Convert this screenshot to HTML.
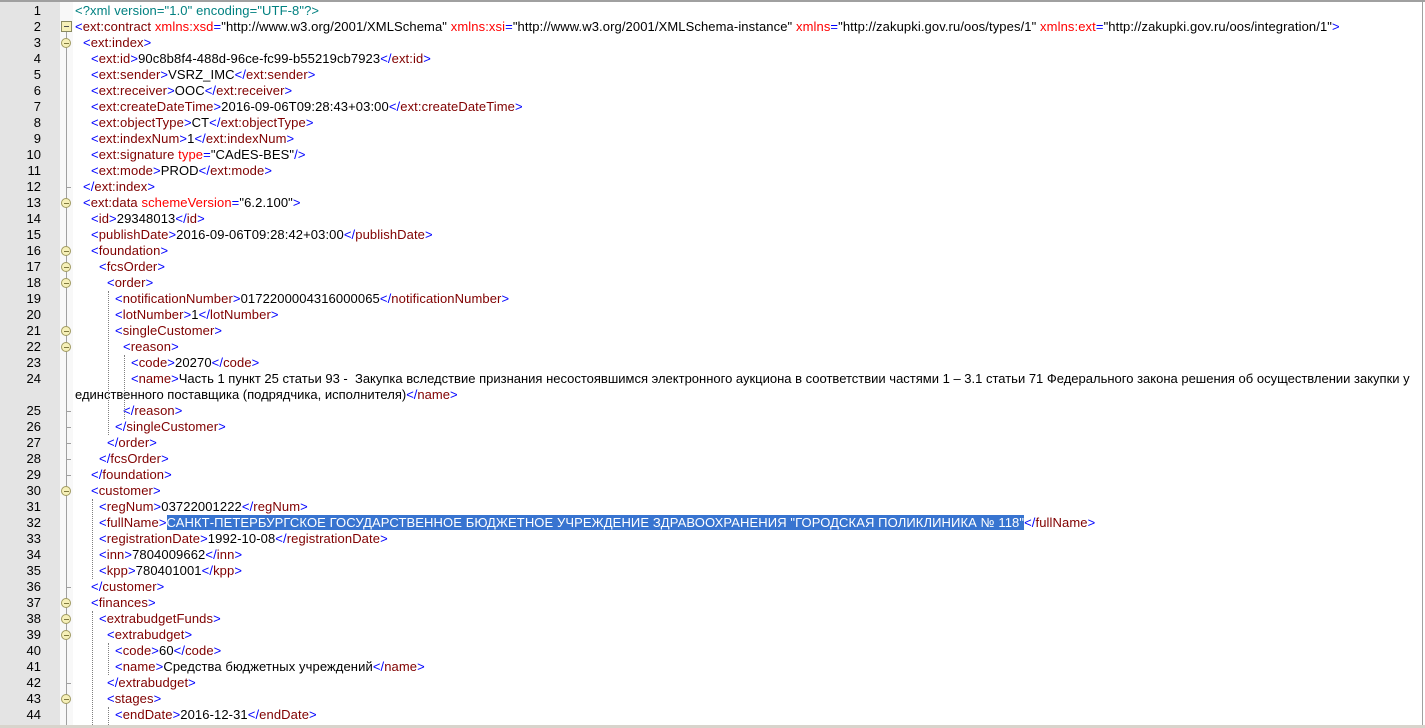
<!DOCTYPE html>
<html><head><meta charset="utf-8"><style>
*{margin:0;padding:0}
body{width:1425px;height:728px;background:#fff;position:relative;overflow:hidden;font-family:"Liberation Sans",Arial,sans-serif;font-size:13px;letter-spacing:0.1px}
#top{position:absolute;left:0;top:0;width:1425px;height:2px;background:#a0a0a0}
#right{position:absolute;right:2px;top:0;width:1px;height:728px;background:#a0a0a0}
#bot{position:absolute;left:0;top:725px;width:1425px;height:3px;background:#d8d4cc}
#gut{position:absolute;left:0;top:2px;width:60px;height:723px;background:#e4e4e4}
#fold{position:absolute;left:60px;top:2px;width:13px;height:723px;background:#f8f8f8}
#vl{position:absolute;left:66px;top:27px;width:1px;height:700px;background:#a0a0a0}
.n{position:absolute;left:0;width:41px;text-align:right;height:16px;line-height:16px;color:#000;letter-spacing:0}
.r{position:absolute;left:75px;height:16px;line-height:16px;white-space:pre;color:#000}
.b{color:#0000ff}.t{color:#800000}.a{color:#ff0000}.d{color:#008080}
.sel{background:#3874d0;color:#fff}
.c{position:absolute;left:61px;width:10px;height:10px;border-radius:50%;background:#f6f0b8;border:1px solid #a09a60;box-sizing:border-box}
.c:after{content:"";position:absolute;left:2px;top:4px;width:5px;height:1px;background:#807a40}
.sq{position:absolute;left:61px;width:11px;height:11px;background:#f6f0b8;border:1px solid #8a8a60;box-sizing:border-box}
.sq:after{content:"";position:absolute;left:2px;top:4px;width:5px;height:1px;background:#505050}
.tk{position:absolute;left:66px;width:5px;height:1px;background:#a0a0a0}
.g{position:absolute;width:0;border-left:1px dotted #808080}
</style></head><body>
<div id="gut"></div><div id="fold"></div><div id="vl"></div>
<div id="top"></div><div id="right"></div><div id="bot"></div>

<div class="n" style="top:3px">1</div><div class="r" style="top:3px"><span class="d">&lt;?xml version="1.0" encoding="UTF-8"?&gt;</span></div>
<div class="n" style="top:19px">2</div><div class="r" style="top:19px"><span class="b">&lt;</span><span class="t">ext:contract</span> <span class="a">xmlns:xsd</span><span class="b">=</span>"http://www.w3.org/2001/XMLSchema" <span class="a">xmlns:xsi</span><span class="b">=</span>"http://www.w3.org/2001/XMLSchema-instance" <span class="a">xmlns</span><span class="b">=</span>"http://zakupki.gov.ru/oos/types/1" <span class="a">xmlns:ext</span><span class="b">=</span>"http://zakupki.gov.ru/oos/integration/1"<span class="b">&gt;</span></div>
<div class="n" style="top:35px">3</div><div class="r" style="top:35px;left:83px"><span class="b">&lt;</span><span class="t">ext:index</span><span class="b">&gt;</span></div>
<div class="n" style="top:51px">4</div><div class="r" style="top:51px;left:91px"><span class="b">&lt;</span><span class="t">ext:id</span><span class="b">&gt;</span>90c8b8f4-488d-96ce-fc99-b55219cb7923<span class="b">&lt;/</span><span class="t">ext:id</span><span class="b">&gt;</span></div>
<div class="n" style="top:67px">5</div><div class="r" style="top:67px;left:91px"><span class="b">&lt;</span><span class="t">ext:sender</span><span class="b">&gt;</span>VSRZ_IMC<span class="b">&lt;/</span><span class="t">ext:sender</span><span class="b">&gt;</span></div>
<div class="n" style="top:83px">6</div><div class="r" style="top:83px;left:91px"><span class="b">&lt;</span><span class="t">ext:receiver</span><span class="b">&gt;</span>OOC<span class="b">&lt;/</span><span class="t">ext:receiver</span><span class="b">&gt;</span></div>
<div class="n" style="top:99px">7</div><div class="r" style="top:99px;left:91px"><span class="b">&lt;</span><span class="t">ext:createDateTime</span><span class="b">&gt;</span>2016-09-06T09:28:43+03:00<span class="b">&lt;/</span><span class="t">ext:createDateTime</span><span class="b">&gt;</span></div>
<div class="n" style="top:115px">8</div><div class="r" style="top:115px;left:91px"><span class="b">&lt;</span><span class="t">ext:objectType</span><span class="b">&gt;</span>CT<span class="b">&lt;/</span><span class="t">ext:objectType</span><span class="b">&gt;</span></div>
<div class="n" style="top:131px">9</div><div class="r" style="top:131px;left:91px"><span class="b">&lt;</span><span class="t">ext:indexNum</span><span class="b">&gt;</span>1<span class="b">&lt;/</span><span class="t">ext:indexNum</span><span class="b">&gt;</span></div>
<div class="n" style="top:147px">10</div><div class="r" style="top:147px;left:91px"><span class="b">&lt;</span><span class="t">ext:signature</span> <span class="a">type</span><span class="b">=</span>"CAdES-BES"<span class="b">/&gt;</span></div>
<div class="n" style="top:163px">11</div><div class="r" style="top:163px;left:91px"><span class="b">&lt;</span><span class="t">ext:mode</span><span class="b">&gt;</span>PROD<span class="b">&lt;/</span><span class="t">ext:mode</span><span class="b">&gt;</span></div>
<div class="n" style="top:179px">12</div><div class="r" style="top:179px;left:83px"><span class="b">&lt;/</span><span class="t">ext:index</span><span class="b">&gt;</span></div>
<div class="n" style="top:195px">13</div><div class="r" style="top:195px;left:83px"><span class="b">&lt;</span><span class="t">ext:data</span> <span class="a">schemeVersion</span><span class="b">=</span>"6.2.100"<span class="b">&gt;</span></div>
<div class="n" style="top:211px">14</div><div class="r" style="top:211px;left:91px"><span class="b">&lt;</span><span class="t">id</span><span class="b">&gt;</span>29348013<span class="b">&lt;/</span><span class="t">id</span><span class="b">&gt;</span></div>
<div class="n" style="top:227px">15</div><div class="r" style="top:227px;left:91px"><span class="b">&lt;</span><span class="t">publishDate</span><span class="b">&gt;</span>2016-09-06T09:28:42+03:00<span class="b">&lt;/</span><span class="t">publishDate</span><span class="b">&gt;</span></div>
<div class="n" style="top:243px">16</div><div class="r" style="top:243px;left:91px"><span class="b">&lt;</span><span class="t">foundation</span><span class="b">&gt;</span></div>
<div class="n" style="top:259px">17</div><div class="r" style="top:259px;left:99px"><span class="b">&lt;</span><span class="t">fcsOrder</span><span class="b">&gt;</span></div>
<div class="n" style="top:275px">18</div><div class="r" style="top:275px;left:107px"><span class="b">&lt;</span><span class="t">order</span><span class="b">&gt;</span></div>
<div class="n" style="top:291px">19</div><div class="r" style="top:291px;left:115px"><span class="b">&lt;</span><span class="t">notificationNumber</span><span class="b">&gt;</span>0172200004316000065<span class="b">&lt;/</span><span class="t">notificationNumber</span><span class="b">&gt;</span></div>
<div class="n" style="top:307px">20</div><div class="r" style="top:307px;left:115px"><span class="b">&lt;</span><span class="t">lotNumber</span><span class="b">&gt;</span>1<span class="b">&lt;/</span><span class="t">lotNumber</span><span class="b">&gt;</span></div>
<div class="n" style="top:323px">21</div><div class="r" style="top:323px;left:115px"><span class="b">&lt;</span><span class="t">singleCustomer</span><span class="b">&gt;</span></div>
<div class="n" style="top:339px">22</div><div class="r" style="top:339px;left:123px"><span class="b">&lt;</span><span class="t">reason</span><span class="b">&gt;</span></div>
<div class="n" style="top:355px">23</div><div class="r" style="top:355px;left:131px"><span class="b">&lt;</span><span class="t">code</span><span class="b">&gt;</span>20270<span class="b">&lt;/</span><span class="t">code</span><span class="b">&gt;</span></div>
<div class="n" style="top:371px">24</div><div class="r" style="top:371px;left:131px;letter-spacing:0"><span class="b">&lt;</span><span class="t">name</span><span class="b">&gt;</span>Часть 1 пункт 25 статьи 93 -  Закупка вследствие признания несостоявшимся электронного аукциона в соответствии частями 1 – 3.1 статьи 71 Федерального закона решения об осуществлении закупки у</div>
<div class="r" style="top:387px;letter-spacing:0">единственного поставщика (подрядчика, исполнителя)<span class="b">&lt;/</span><span class="t">name</span><span class="b">&gt;</span></div>
<div class="n" style="top:403px">25</div><div class="r" style="top:403px;left:123px"><span class="b">&lt;/</span><span class="t">reason</span><span class="b">&gt;</span></div>
<div class="n" style="top:419px">26</div><div class="r" style="top:419px;left:115px"><span class="b">&lt;/</span><span class="t">singleCustomer</span><span class="b">&gt;</span></div>
<div class="n" style="top:435px">27</div><div class="r" style="top:435px;left:107px"><span class="b">&lt;/</span><span class="t">order</span><span class="b">&gt;</span></div>
<div class="n" style="top:451px">28</div><div class="r" style="top:451px;left:99px"><span class="b">&lt;/</span><span class="t">fcsOrder</span><span class="b">&gt;</span></div>
<div class="n" style="top:467px">29</div><div class="r" style="top:467px;left:91px"><span class="b">&lt;/</span><span class="t">foundation</span><span class="b">&gt;</span></div>
<div class="n" style="top:483px">30</div><div class="r" style="top:483px;left:91px"><span class="b">&lt;</span><span class="t">customer</span><span class="b">&gt;</span></div>
<div class="n" style="top:499px">31</div><div class="r" style="top:499px;left:99px"><span class="b">&lt;</span><span class="t">regNum</span><span class="b">&gt;</span>03722001222<span class="b">&lt;/</span><span class="t">regNum</span><span class="b">&gt;</span></div>
<div class="n" style="top:515px">32</div><div class="r" style="top:515px;left:99px"><span class="b">&lt;</span><span class="t">fullName</span><span class="b">&gt;</span><span class="sel">САНКТ-ПЕТЕРБУРГСКОЕ ГОСУДАРСТВЕННОЕ БЮДЖЕТНОЕ УЧРЕЖДЕНИЕ ЗДРАВООХРАНЕНИЯ "ГОРОДСКАЯ ПОЛИКЛИНИКА № 118"</span><span class="b">&lt;/</span><span class="t">fullName</span><span class="b">&gt;</span></div>
<div class="n" style="top:531px">33</div><div class="r" style="top:531px;left:99px"><span class="b">&lt;</span><span class="t">registrationDate</span><span class="b">&gt;</span>1992-10-08<span class="b">&lt;/</span><span class="t">registrationDate</span><span class="b">&gt;</span></div>
<div class="n" style="top:547px">34</div><div class="r" style="top:547px;left:99px"><span class="b">&lt;</span><span class="t">inn</span><span class="b">&gt;</span>7804009662<span class="b">&lt;/</span><span class="t">inn</span><span class="b">&gt;</span></div>
<div class="n" style="top:563px">35</div><div class="r" style="top:563px;left:99px"><span class="b">&lt;</span><span class="t">kpp</span><span class="b">&gt;</span>780401001<span class="b">&lt;/</span><span class="t">kpp</span><span class="b">&gt;</span></div>
<div class="n" style="top:579px">36</div><div class="r" style="top:579px;left:91px"><span class="b">&lt;/</span><span class="t">customer</span><span class="b">&gt;</span></div>
<div class="n" style="top:595px">37</div><div class="r" style="top:595px;left:91px"><span class="b">&lt;</span><span class="t">finances</span><span class="b">&gt;</span></div>
<div class="n" style="top:611px">38</div><div class="r" style="top:611px;left:99px"><span class="b">&lt;</span><span class="t">extrabudgetFunds</span><span class="b">&gt;</span></div>
<div class="n" style="top:627px">39</div><div class="r" style="top:627px;left:107px"><span class="b">&lt;</span><span class="t">extrabudget</span><span class="b">&gt;</span></div>
<div class="n" style="top:643px">40</div><div class="r" style="top:643px;left:115px"><span class="b">&lt;</span><span class="t">code</span><span class="b">&gt;</span>60<span class="b">&lt;/</span><span class="t">code</span><span class="b">&gt;</span></div>
<div class="n" style="top:659px">41</div><div class="r" style="top:659px;left:115px"><span class="b">&lt;</span><span class="t">name</span><span class="b">&gt;</span>Средства бюджетных учреждений<span class="b">&lt;/</span><span class="t">name</span><span class="b">&gt;</span></div>
<div class="n" style="top:675px">42</div><div class="r" style="top:675px;left:107px"><span class="b">&lt;/</span><span class="t">extrabudget</span><span class="b">&gt;</span></div>
<div class="n" style="top:691px">43</div><div class="r" style="top:691px;left:107px"><span class="b">&lt;</span><span class="t">stages</span><span class="b">&gt;</span></div>
<div class="n" style="top:707px">44</div><div class="r" style="top:707px;left:115px"><span class="b">&lt;</span><span class="t">endDate</span><span class="b">&gt;</span>2016-12-31<span class="b">&lt;/</span><span class="t">endDate</span><span class="b">&gt;</span></div>

<div class="sq" style="top:21px"></div>
<div class="c" style="top:38px"></div>
<div class="c" style="top:198px"></div>
<div class="c" style="top:246px"></div>
<div class="c" style="top:262px"></div>
<div class="c" style="top:278px"></div>
<div class="c" style="top:326px"></div>
<div class="c" style="top:342px"></div>
<div class="c" style="top:486px"></div>
<div class="c" style="top:598px"></div>
<div class="c" style="top:614px"></div>
<div class="c" style="top:630px"></div>
<div class="c" style="top:694px"></div>
<div class="tk" style="top:187px"></div>
<div class="tk" style="top:411px"></div>
<div class="tk" style="top:427px"></div>
<div class="tk" style="top:443px"></div>
<div class="tk" style="top:459px"></div>
<div class="tk" style="top:475px"></div>
<div class="tk" style="top:587px"></div>
<div class="tk" style="top:683px"></div>

<div class="g" style="left:108px;top:291px;height:144px"></div>
<div class="g" style="left:124px;top:355px;height:64px"></div>
<div class="g" style="left:92px;top:499px;height:80px"></div>
<div class="g" style="left:92px;top:611px;height:114px"></div>
<div class="g" style="left:108px;top:643px;height:32px"></div>
<div class="g" style="left:108px;top:707px;height:18px"></div>
</body></html>
